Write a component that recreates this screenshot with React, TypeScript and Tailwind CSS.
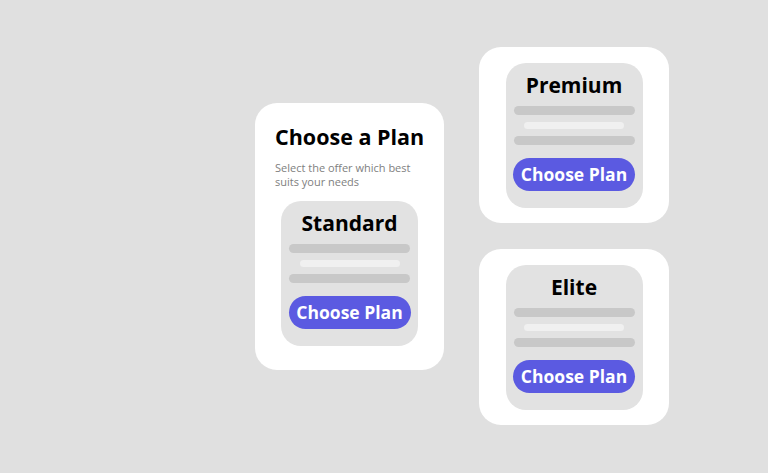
import React from "react";

const font = { fontFamily: '"Open Sans", "Noto Sans", sans-serif' };

function PlanPanel({ name }: { name: string }) {
  return (
    <div className="w-[137px] h-[145px] rounded-[20px] bg-[#e2e2e2] flex flex-col items-center pt-[7.5px]">
      <div className="text-[21px] leading-[28px] font-bold text-black">{name}</div>
      <div className="mt-[7px] w-[121px] h-[9.5px] rounded-full bg-[#c8c8c8]" />
      <div className="mt-[6.5px] w-[100px] h-[7.5px] rounded-full bg-[#f0f0f0]" />
      <div className="mt-[6.5px] w-[121px] h-[9.5px] rounded-full bg-[#c8c8c8]" />
      <button className="mt-[13px] w-[122px] h-[33px] rounded-full bg-[#5b5ae1] text-white text-[17.5px] leading-[33px] font-bold">
        Choose Plan
      </button>
    </div>
  );
}

export default function App() {
  return (
    <div
      className="w-[768px] h-[473px] bg-[#e0e0e0] flex items-start pl-[255px] pt-[47px] gap-[35px]"
      style={font}
    >
      <div className="mt-[56px] w-[189px] h-[267px] rounded-[22px] bg-white flex flex-col pt-[19.5px]">
        <div className="pl-[20px] text-[21.5px] leading-[28px] font-bold text-black">Choose a Plan</div>
        <div className="pl-[20px] mt-[10.5px] w-[170px] text-[11px] leading-[14px] text-[#808080]">
          Select the offer which best suits your needs
        </div>
        <div className="mt-[12px] flex justify-center">
          <PlanPanel name="Standard" />
        </div>
      </div>
      <div className="flex flex-col gap-[26px]">
        <div className="w-[190px] h-[176px] rounded-[22px] bg-white flex justify-center pt-[16px]">
          <PlanPanel name="Premium" />
        </div>
        <div className="w-[190px] h-[176px] rounded-[22px] bg-white flex justify-center pt-[16px]">
          <PlanPanel name="Elite" />
        </div>
      </div>
    </div>
  );
}
